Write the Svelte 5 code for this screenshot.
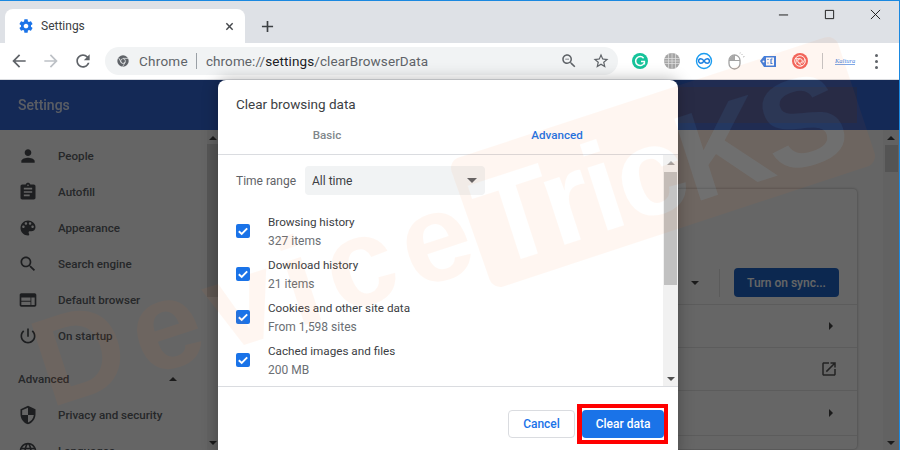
<script>
  const navItems = [
    { label: 'People', d: 'M12 12c2.21 0 4-1.79 4-4s-1.79-4-4-4-4 1.79-4 4 1.79 4 4 4zm0 2c-2.67 0-8 1.34-8 4v2h16v-2c0-2.66-5.33-4-8-4z' },
    { label: 'Autofill', d: 'M19 3h-4.18C14.4 1.84 13.3 1 12 1c-1.3 0-2.4.84-2.82 2H5c-1.1 0-2 .9-2 2v14c0 1.1.9 2 2 2h14c1.1 0 2-.9 2-2V5c0-1.1-.9-2-2-2zm-7 0c.55 0 1 .45 1 1s-.45 1-1 1-1-.45-1-1 .45-1 1-1zm2 14H7v-2h7v2zm3-4H7v-2h10v2zm0-4H7V7h10v2z' },
    { label: 'Appearance', d: 'M12 3c-4.97 0-9 4.03-9 9s4.03 9 9 9c.83 0 1.5-.67 1.5-1.5 0-.39-.15-.74-.39-1.01-.23-.26-.38-.61-.38-.99 0-.83.67-1.5 1.5-1.5H16c2.76 0 5-2.24 5-5 0-4.42-4.03-8-9-8zm-5.5 9c-.83 0-1.5-.67-1.5-1.5S5.67 9 6.5 9 8 9.67 8 10.5 7.33 12 6.5 12zm3-4C8.67 8 8 7.33 8 6.5S8.67 5 9.5 5s1.5.67 1.5 1.5S10.33 8 9.5 8zm5 0c-.83 0-1.5-.67-1.5-1.5S13.67 5 14.5 5s1.5.67 1.5 1.5S15.33 8 14.5 8zm3 4c-.83 0-1.5-.67-1.5-1.5S16.67 9 17.5 9s1.5.67 1.5 1.5-.67 1.5-1.5 1.5z' },
    { label: 'Search engine', d: 'M15.5 14h-.79l-.28-.27C15.41 12.59 16 11.11 16 9.5 16 5.91 13.09 3 9.5 3S3 5.91 3 9.5 5.91 16 9.5 16c1.61 0 3.09-.59 4.23-1.57l.27.28v.79l5 4.99L20.49 19l-4.99-5zm-6 0C7.01 14 5 11.99 5 9.5S7.01 5 9.5 5 14 7.01 14 9.5 11.99 14 9.5 14z' },
    { label: 'Default browser', d: 'M20 4H4c-1.1 0-1.99.9-1.99 2L2 18c0 1.1.9 2 2 2h16c1.1 0 2-.9 2-2V6c0-1.1-.9-2-2-2zm-5 14H4v-4h11v4zm0-5H4V9h11v4zm5 5h-4V9h4v9z' },
    { label: 'On startup', d: 'M13 3h-2v10h2V3zm4.83 2.17l-1.42 1.42C17.99 7.86 19 9.81 19 12c0 3.87-3.13 7-7 7s-7-3.13-7-7c0-2.19 1.01-4.14 2.58-5.42L6.17 5.17C4.23 6.82 3 9.26 3 12c0 4.97 4.03 9 9 9s9-4.03 9-9c0-2.74-1.23-5.18-3.17-6.83z' }
  ];

  const advancedItems = [
    { label: 'Privacy and security', d: 'M12 1L3 5v6c0 5.55 3.84 10.74 9 12 5.16-1.26 9-6.45 9-12V5l-9-4zm0 10.99h7c-.53 4.12-3.28 7.79-7 8.94V12H5V6.3l7-3.11v8.8z' },
    { label: 'Languages', d: 'M11.99 2C6.47 2 2 6.48 2 12s4.47 10 9.99 10C17.52 22 22 17.52 22 12S17.52 2 11.99 2zm6.93 6h-2.95c-.32-1.25-.78-2.45-1.38-3.56 1.84.63 3.37 1.91 4.33 3.56zM12 4.04c.83 1.2 1.48 2.53 1.91 3.96h-3.82c.43-1.43 1.08-2.76 1.91-3.96zM4.26 14C4.1 13.36 4 12.69 4 12s.1-1.36.26-2h3.38c-.08.66-.14 1.32-.14 2 0 .68.06 1.34.14 2H4.26zm.82 2h2.95c.32 1.25.78 2.45 1.38 3.56-1.84-.63-3.37-1.9-4.33-3.56zm2.95-8H5.08c.96-1.66 2.49-2.93 4.33-3.56C8.81 5.55 8.35 6.75 8.03 8zM12 19.96c-.83-1.2-1.48-2.53-1.91-3.96h3.82c-.43 1.43-1.08 2.76-1.91 3.96zM14.34 14H9.66c-.09-.66-.16-1.32-.16-2 0-.68.07-1.35.16-2h4.68c.09.65.16 1.32.16 2 0 .68-.07 1.34-.16 2zm.25 5.56c.6-1.11 1.06-2.31 1.38-3.56h2.95c-.96 1.65-2.49 2.93-4.33 3.56zM16.36 14c.08-.66.14-1.32.14-2 0-.68-.06-1.34-.14-2h3.38c.16.64.26 1.31.26 2s-.1 1.36-.26 2h-3.38z' }
  ];

  const dataTypes = [
    { title: 'Browsing history', sub: '327 items' },
    { title: 'Download history', sub: '21 items' },
    { title: 'Cookies and other site data', sub: 'From 1,598 sites' },
    { title: 'Cached images and files', sub: '200 MB' }
  ];
</script>

<div class="window">
  <div class="tabstrip">
    <div class="tab">
      <svg class="gear" viewBox="0 0 24 24"><path d="M19.43 12.98c.04-.32.07-.64.07-.98s-.03-.66-.07-.98l2.11-1.65c.19-.15.24-.42.12-.64l-2-3.46c-.12-.22-.39-.3-.61-.22l-2.49 1c-.52-.4-1.08-.73-1.69-.98l-.38-2.65C14.46 2.18 14.25 2 14 2h-4c-.25 0-.46.18-.49.42l-.38 2.65c-.61.25-1.17.59-1.69.98l-2.49-1c-.23-.09-.49 0-.61.22l-2 3.46c-.13.22-.07.49.12.64l2.11 1.65c-.04.32-.07.65-.07.98s.03.66.07.98l-2.11 1.65c-.19.15-.24.42-.12.64l2 3.46c.12.22.39.3.61.22l2.49-1c.52.4 1.08.73 1.69.98l.38 2.65c.03.24.24.42.49.42h4c.25 0 .46-.18.49-.42l.38-2.65c.61-.25 1.17-.59 1.69-.98l2.49 1c.23.09.49 0 .61-.22l2-3.46c.12-.22.07-.49-.12-.64l-2.11-1.65zM12 15.5c-1.93 0-3.5-1.57-3.5-3.5s1.57-3.5 3.5-3.5 3.5 1.57 3.5 3.5-1.57 3.5-3.5 3.5z"/></svg>
      <span class="tab-title">Settings</span>
      <svg class="tab-close" viewBox="0 0 10 10"><path d="M1.5 1.5l7 7M8.5 1.5l-7 7"/></svg>
    </div>
    <svg class="new-tab" viewBox="0 0 14 14"><path d="M7 1v12M1 7h12"/></svg>
    <div class="win-controls">
      <svg viewBox="0 0 12 12"><path d="M1 6.500h10"/></svg>
      <svg viewBox="0 0 12 12"><path d="M1.500 1.500h9v9h-9z"/></svg>
      <svg viewBox="0 0 12 12"><path d="M1 1l10 10M11 1L1 11"/></svg>
    </div>
  </div>

  <div class="toolbar">
    <div class="nav-buttons">
      <svg viewBox="0 0 24 24" class="nav-icon"><path d="M20 11H7.83l5.59-5.59L12 4l-8 8 8 8 1.41-1.41L7.83 13H20v-2z"/></svg>
      <svg viewBox="0 0 24 24" class="nav-icon off"><path d="M12 4l-1.41 1.41L16.17 11H4v2h12.17l-5.58 5.59L12 20l8-8z"/></svg>
      <svg viewBox="0 0 24 24" class="nav-icon"><path d="M17.65 6.35C16.2 4.9 14.21 4 12 4c-4.42 0-7.99 3.58-7.99 8s3.57 8 7.99 8c3.73 0 6.84-2.55 7.73-6h-2.08c-.82 2.33-3.04 4-5.65 4-3.31 0-6-2.69-6-6s2.69-6 6-6c1.66 0 3.14.69 4.22 1.78L13 11h7V4l-2.35 2.35z"/></svg>
    </div>
    <div class="omnibox">
      <svg class="chrome-icon" viewBox="0 0 16 16">
        <circle cx="8" cy="8" r="6.500" fill="#5f6368"/>
        <circle cx="8" cy="8" r="3" fill="#f1f3f4"/>
        <circle cx="8" cy="8" r="2.200" fill="#5f6368"/>
        <path d="M8 5h6M6 9.700L3 4.500M10.500 9.500l-3 5" stroke="#f1f3f4" stroke-width=".8" fill="none"/>
      </svg>
      <span class="origin">Chrome</span>
      <span class="omni-sep"></span>
      <span class="url">chrome://<b>settings</b>/clearBrowserData</span>
      <span class="omni-actions">
        <svg viewBox="0 0 24 24"><path d="M15.5 14h-.79l-.28-.27C15.41 12.59 16 11.11 16 9.5 16 5.91 13.09 3 9.5 3S3 5.91 3 9.5 5.91 16 9.5 16c1.61 0 3.09-.59 4.23-1.57l.27.28v.79l5 4.99L20.49 19l-4.99-5zm-6 0C7.01 14 5 11.99 5 9.5S7.01 5 9.5 5 14 7.01 14 9.5 11.99 14 9.5 14zM7 9h5v1H7z"/></svg>
        <svg viewBox="0 0 24 24"><path d="M22 9.24l-7.19-.62L12 2 9.19 8.63 2 9.24l5.46 4.73L5.82 21 12 17.27 18.18 21l-1.63-7.03L22 9.24zM12 15.4l-3.76 2.27 1-4.28-3.32-2.88 4.38-.38L12 6.1l1.71 4.04 4.38.38-3.32 2.88 1 4.28L12 15.4z"/></svg>
      </span>
    </div>
    <div class="extensions">
      <svg viewBox="0 0 18 18"><circle cx="9" cy="9" r="8" fill="#15c39a"/><path d="M12.600 6.200A4.500 4.500 0 1 0 13 11.400M10 9.600h3.400v3" fill="none" stroke="#fff" stroke-width="1.500"/></svg>
      <svg viewBox="0 0 18 18"><circle cx="9" cy="9" r="8" fill="#a5a5a5"/><path d="M1 6.500h16M1 9h16M1 11.500h16M5.500 2v14M9 1v16M12.500 2v14" stroke="#e4e4e4" stroke-width=".7" fill="none"/></svg>
      <svg viewBox="0 0 18 18"><circle cx="9" cy="9" r="7.500" fill="#fff" stroke="#1a9cf0" stroke-width="1.400"/><path d="M9 9C7.800 7.200 6.800 6.800 5.800 6.800a2.200 2.200 0 0 0 0 4.400c1 0 2-.4 3.200-2.200s2.200-2.200 3.200-2.200a2.200 2.200 0 0 1 0 4.400c-1 0-2-.4-3.200-2.200z" fill="none" stroke="#1a7fe0" stroke-width="1.400"/></svg>
      <svg viewBox="0 0 18 18"><rect x="2" y="3" width="11" height="14" rx="5.500" fill="#fff" stroke="#a3a3a3" stroke-width="1.300"/><path d="M2 8.500h11M7.500 3v5.500" stroke="#a3a3a3" stroke-width="1"/><path d="M2.500 8V7.500a5 5 0 0 1 5-4V8z" fill="#a9a9a9"/><path d="M14.500 3l1-1M16 5l1.500-.5M13 1.500l.3-1" stroke="#aaa" stroke-width=".8"/></svg>
      <svg viewBox="0 0 18 18"><path d="M1 9l4-5h12v11H5z" fill="#3f7fe0"/><rect x="7" y="5.500" width="8" height="8" fill="#fff"/><path d="M9 7v1M9 10.500v1M12 7v4.500h1.500M12 7h1.500" stroke="#3f7fe0" stroke-width="1.200" fill="none"/><circle cx="4.500" cy="9.500" r="1" fill="#fff"/></svg>
      <svg viewBox="0 0 18 18"><circle cx="9" cy="9" r="8" fill="#f2655f"/><circle cx="9" cy="9" r="5.300" fill="none" stroke="#fff" stroke-width="1"/><circle cx="9" cy="9" r="2.300" fill="none" stroke="#fff" stroke-width="1"/><path d="M4 6.500L9 6.700M14 7l-2.500 4.500M11 14L7 10.500M4.500 12l1.500-5.500" stroke="#fff" stroke-width=".8"/></svg>
    </div>
    <span class="ext-sep"></span>
    <span class="ext-label">Kaltura</span>
    <div class="menu-dots"><i></i><i></i><i></i></div>
  </div>

  <div class="page">
    <header class="settings-header">
      <span class="settings-title">Settings</span>
      <div class="search-box"></div>
    </header>

    <div class="settings-body">
      <nav class="sidebar">
        <div class="sidebar-inner">
          {#each navItems as item}
            <div class="nav-row">
              <svg viewBox="0 0 24 24"><path d={item.d}/></svg>
              <span>{item.label}</span>
            </div>
          {/each}
          <div class="advanced-row">
            <span>Advanced</span>
            <i class="tri up"></i>
          </div>
          {#each advancedItems as item}
            <div class="nav-row">
              <svg viewBox="0 0 24 24"><path d={item.d}/></svg>
              <span>{item.label}</span>
            </div>
          {/each}
        </div>
        <div class="scrollbar side-scroll">
          <i class="tri up"></i>
          <div class="thumb"></div>
          <i class="tri down end"></i>
        </div>
      </nav>

      <main class="main">
        <section class="card">
          <div class="sync-row">
            <i class="tri down"></i>
            <span class="sync-sep"></span>
            <button class="sync-btn">Turn on sync...</button>
          </div>
          <div class="card-row"><i class="tri right"></i></div>
          <div class="card-row">
            <svg viewBox="0 0 24 24"><path d="M19 19H5V5h7V3H5c-1.110 0-2 .9-2 2v14c0 1.100.89 2 2 2h14c1.100 0 2-.9 2-2v-7h-2v7zM14 3v2h3.590l-9.830 9.830 1.410 1.410L19 6.410V10h2V3h-7z"/></svg>
          </div>
          <div class="card-row tall"><i class="tri right"></i></div>
          <div class="card-row"></div>
        </section>
      </main>

      <div class="scrollbar main-scroll">
        <i class="tri up"></i>
        <div class="thumb"></div>
        <i class="tri down end"></i>
      </div>
    </div>

    <div class="scrim"></div>

    <div class="dialog">
      <h2>Clear browsing data</h2>
      <div class="tabs">
        <span class="dlg-tab">Basic</span>
        <span class="dlg-tab active">Advanced</span>
      </div>
      <div class="dlg-body">
        <div class="dlg-scroll">
          <div class="time-row">
            <span class="time-label">Time range</span>
            <div class="select">
              <span>All time</span>
              <i class="tri down"></i>
            </div>
          </div>
          {#each dataTypes as row}
            <div class="check-row">
              <svg class="checkbox" viewBox="0 0 14 14">
                <rect width="14" height="14" rx="2" fill="#1a73e8"/>
                <path d="M2.800 7.200l2.900 2.800 5.500-5.600" fill="none" stroke="#fff" stroke-width="1.900"/>
              </svg>
              <div class="check-text">
                <div class="check-title">{row.title}</div>
                <div class="check-sub">{row.sub}</div>
              </div>
            </div>
          {/each}
        </div>
        <div class="scrollbar dlg-bar">
          <i class="tri up"></i>
          <div class="thumb"></div>
          <i class="tri down end"></i>
        </div>
      </div>
      <div class="dlg-footer">
        <button class="btn-cancel">Cancel</button>
        <span class="highlight"><button class="btn-clear">Clear data</button></span>
      </div>
    </div>
  </div>

  <!-- site watermark: orange "Device", white "Tricks" knocked out of an orange banner -->
  <svg class="watermark" viewBox="0 0 900 450">
    <defs>
      <mask id="wm-mask" maskUnits="userSpaceOnUse" x="0" y="0" width="900" height="450">
        <rect width="900" height="450" fill="#fff"/>
        <text x="493" y="268" transform="rotate(-18 493 268)" class="wm-text tricks" fill="#000">TricKS</text>
      </mask>
    </defs>
    <g opacity=".05">
      <text x="50" y="408" transform="rotate(-18 50 408)" class="wm-text device" fill="#ff6a10">Device</text>
      <path d="M462 168L828 48 864 156 500 276z" fill="#ff6a10" stroke="#ff6a10" stroke-width="22" stroke-linejoin="round" mask="url(#wm-mask)"/>
    </g>
    <text x="493" y="268" transform="rotate(-18 493 268)" class="wm-text tricks" fill="#fff" fill-opacity=".07">TricKS</text>
  </svg>
</div>

<style>
  :global(body) {
    margin: 0;
    overflow: hidden;
  }

  .window {
    position: relative;
    width: 900px;
    height: 450px;
    overflow: hidden;
    display: flex;
    flex-direction: column;
    box-sizing: border-box;
    border-top: 1px solid #1a88e0;
    border-right: 1px solid #1a88e0;
    font-family: Roboto, "Liberation Sans", sans-serif;
    background: #fff;
  }

  /* tab strip */
  .tabstrip {
    height: 42px;
    flex: none;
    display: flex;
    align-items: flex-end;
    padding-left: 5px;
    background: #dee1e6;
  }
  .tab {
    width: 240px;
    height: 34px;
    box-sizing: border-box;
    display: flex;
    align-items: center;
    padding: 0 10px 0 13px;
    background: #fff;
    border-radius: 8px 8px 0 0;
  }
  .gear {
    width: 16px;
    height: 16px;
    fill: #1a73e8;
  }
  .tab-title {
    margin-left: 7px;
    font-size: 12px;
    color: #3c4043;
  }
  .tab-close {
    margin-left: auto;
    width: 9px;
    height: 9px;
    margin-right: 1px;
    fill: none;
    stroke: #45484c;
    stroke-width: 1.6;
  }
  .new-tab {
    width: 13px;
    height: 13px;
    margin: 0 0 10px 16px;
    fill: none;
    stroke: #3c4043;
    stroke-width: 1.8;
  }
  .win-controls {
    margin-left: auto;
    align-self: flex-start;
    display: flex;
    gap: 35px;
    padding: 8px 18px 0 0;
  }
  .win-controls svg {
    width: 11px;
    height: 11px;
    fill: none;
    stroke: #111;
    stroke-width: 1;
  }

  /* toolbar */
  .toolbar {
    height: 36px;
    flex: none;
    display: flex;
    align-items: center;
    background: #fff;
    border-bottom: 1px solid #dadce0;
  }
  .nav-buttons {
    display: flex;
    gap: 12px;
    width: 105px;
    padding-left: 9px;
    box-sizing: border-box;
  }
  .nav-icon {
    width: 20px;
    height: 20px;
    fill: #5f6368;
  }
  .nav-icon.off {
    fill: #bdc1c6;
  }
  .omnibox {
    width: 513px;
    height: 28px;
    display: flex;
    align-items: center;
    box-sizing: border-box;
    padding: 0 8px 0 11px;
    background: #f1f3f4;
    border-radius: 14px;
    font-size: 13.5px;
    color: #5f6368;
  }
  .chrome-icon {
    width: 14px;
    height: 14px;
    margin-right: 9px;
  }
  .origin {
    letter-spacing: .25px;
  }
  .omni-sep {
    width: 1px;
    height: 16px;
    margin: 0 9px 0 8px;
    background: #9aa0a6;
  }
  .url {
    letter-spacing: .09px;
  }
  .url b {
    font-weight: 400;
    color: #202124;
  }
  .omni-actions {
    margin-left: auto;
    display: flex;
    gap: 14px;
  }
  .omni-actions svg {
    width: 18px;
    height: 18px;
    fill: #5f6368;
  }
  .extensions {
    display: flex;
    gap: 14px;
    margin-left: 13px;
  }
  .extensions svg {
    width: 18px;
    height: 18px;
  }
  .ext-sep {
    width: 1px;
    height: 16px;
    margin-left: 13px;
    background: #c4c7ca;
  }
  .ext-label {
    width: 20px;
    margin-left: 12px;
    font: italic 6.5px "Liberation Serif", serif;
    line-height: 7px;
    color: #3f7fe0;
    border-bottom: 1px solid #7fa8e6;
    white-space: nowrap;
  }
  .menu-dots {
    display: flex;
    flex-direction: column;
    gap: 3px;
    margin-left: 20px;
  }
  .menu-dots i {
    width: 3px;
    height: 3px;
    border-radius: 50%;
    background: #5f6368;
  }

  /* settings page behind the dialog */
  .page {
    flex: 1;
    min-height: 0;
    position: relative;
    display: flex;
    flex-direction: column;
    background: #fff;
  }
  .settings-header {
    height: 50px;
    flex: none;
    display: flex;
    align-items: center;
    justify-content: space-between;
    padding: 0 42px 0 18px;
    background: #3367d6;
  }
  .settings-title {
    font-size: 14px;
    font-weight: 500;
    color: #fff;
    opacity: .85;
  }
  .search-box {
    width: 420px;
    height: 36px;
    background: #4664b7;
  }
  .settings-body {
    flex: 1;
    min-height: 0;
    display: flex;
  }
  .sidebar {
    width: 218px;
    flex: none;
    display: flex;
    background: #fdfdfd;
  }
  .sidebar-inner {
    flex: 1;
    padding-top: 8px;
  }
  .nav-row {
    height: 36px;
    display: flex;
    align-items: center;
    padding-left: 18px;
    font-size: 11.6px;
    font-weight: 500;
    color: #5f6368;
  }
  .nav-row svg {
    width: 20px;
    height: 20px;
    margin-right: 20px;
    fill: #4a4d51;
  }
  .advanced-row {
    height: 43px;
    padding: 7px 30px 0 18px;
    box-sizing: border-box;
    display: flex;
    align-items: center;
    justify-content: space-between;
    font-size: 11.6px;
    font-weight: 500;
    color: #5f6368;
  }

  .scrollbar {
    flex: none;
    display: flex;
    flex-direction: column;
    align-items: center;
  }
  .scrollbar .tri.up {
    margin-top: 6px;
  }
  .scrollbar .end {
    margin-top: auto;
    margin-bottom: 5px;
  }
  .side-scroll {
    width: 11px;
    background: #f6f6f6;
  }
  .side-scroll .thumb {
    width: 11px;
    height: 153px;
    margin-top: 4px;
    background: #d8d8d8;
  }
  .main-scroll {
    width: 16px;
    background: #f4f4f4;
  }
  .main-scroll .thumb {
    width: 13px;
    height: 27px;
    margin-top: 5px;
    background: #d2d2d2;
  }

  .main {
    flex: 1;
    min-width: 0;
    padding: 59px 26px 0 22px;
    background: #fdfdfd;
  }
  .card {
    height: 260px;
    background: #fff;
    border-radius: 4px;
    box-shadow: 0 0 3px rgba(0, 0, 0, .35);
  }
  .sync-row {
    height: 115px;
    box-sizing: border-box;
    padding: 72px 18px 0 0;
    display: flex;
    align-items: center;
    justify-content: flex-end;
  }
  .sync-sep {
    width: 1px;
    height: 28px;
    margin: 0 14px 0 20px;
    background: #e4e4e4;
  }
  .sync-btn {
    width: 105px;
    height: 29px;
    padding: 0;
    border: none;
    border-radius: 4px;
    background: #1e65c8;
    color: #fff;
    font: 500 12px Roboto, sans-serif;
  }
  .card-row {
    height: 43px;
    box-sizing: border-box;
    display: flex;
    align-items: center;
    justify-content: flex-end;
    padding-right: 20px;
    border-top: 1px solid #e6e6e6;
  }
  .card-row.tall {
    height: 45px;
  }
  .card-row svg {
    width: 18px;
    height: 18px;
    margin-right: -1px;
    fill: #555;
  }
  .card-row .tri {
    margin-right: 4px;
  }

  .scrim {
    position: absolute;
    inset: 0;
    background: rgba(0, 0, 0, .6);
  }

  /* dialog */
  .dialog {
    position: absolute;
    left: 218px;
    top: 0;
    width: 460px;
    height: 380px;
    display: flex;
    flex-direction: column;
    background: #fff;
    border-radius: 8px;
    box-shadow: 0 0 16px rgba(0, 0, 0, .3);
  }
  .dialog h2 {
    margin: 0;
    padding: 16px 18px 0;
    height: 40px;
    box-sizing: border-box;
    font-size: 13.5px;
    line-height: 17px;
    font-weight: 400;
    color: #3c4043;
  }
  .tabs {
    height: 34px;
    display: grid;
    grid-template-columns: 218px 242px;
    border-bottom: 1px solid #dadce0;
  }
  .dlg-tab {
    text-align: center;
    padding-top: 8px;
    font-size: 11.6px;
    font-weight: 500;
    color: #80868b;
  }
  .dlg-tab.active {
    color: #1a73e8;
  }
  .dlg-body {
    height: 231px;
    flex: none;
    display: flex;
    overflow: hidden;
    border-bottom: 1px solid #dadce0;
  }
  .dlg-scroll {
    flex: 1;
    min-width: 0;
    padding: 11px 0 0 18px;
  }
  .time-row {
    display: flex;
    align-items: center;
    gap: 9px;
    height: 29px;
    margin-bottom: 15px;
    font-size: 12px;
  }
  .time-label {
    color: #5f6368;
  }
  .select {
    width: 180px;
    height: 29px;
    box-sizing: border-box;
    display: flex;
    align-items: center;
    justify-content: space-between;
    padding: 0 7px;
    background: #f1f3f4;
    border-radius: 4px;
    color: #3c4043;
  }
  .check-row {
    height: 43px;
    display: flex;
    align-items: center;
  }
  .checkbox {
    width: 14px;
    height: 14px;
    flex: none;
    margin: -1px 18px 0 0;
  }
  .check-title {
    font-size: 11.7px;
    line-height: 18px;
    margin-bottom: 1px;
    color: #3c4043;
  }
  .check-sub {
    font-size: 12px;
    line-height: 18px;
    color: #6b6f74;
  }
  .dlg-bar {
    width: 15px;
    background: #f1f1f1;
  }
  .dlg-bar .thumb {
    width: 13px;
    height: 113px;
    margin-top: 7px;
    background: #c1c1c1;
  }
  .dlg-footer {
    flex: 1;
    display: flex;
    align-items: center;
    justify-content: flex-end;
    gap: 2px;
    padding-right: 10px;
  }
  .btn-cancel {
    width: 67px;
    height: 28px;
    padding: 0;
    background: #fff;
    border: 1px solid #dadce0;
    border-radius: 4px;
    color: #1a73e8;
    font: 500 12px Roboto, sans-serif;
  }
  .highlight {
    display: block;
    padding: 2px 0;
    border: 4px solid #f00;
    border-left-width: 5px;
  }
  .btn-clear {
    display: block;
    width: 82px;
    height: 28px;
    padding: 0;
    background: #1a73e8;
    border: none;
    border-radius: 4px;
    color: #fff;
    font: 500 12px Roboto, sans-serif;
  }

  /* small triangles used by menus and scrollbars */
  .tri {
    display: block;
    width: 0;
    height: 0;
    border-style: solid;
    border-color: transparent;
  }
  .tri.up {
    border-width: 0 4px 4px;
    border-bottom-color: #444;
  }
  .tri.down {
    border-width: 4px 4px 0;
    border-top-color: #444;
  }
  .tri.right {
    border-width: 4px 0 4px 4px;
    border-left-color: #444;
  }
  .select .tri.down {
    border-width: 5px 5px 0;
    border-top-color: #5f6368;
    margin-right: 1px;
  }
  .dlg-bar .tri.up {
    border-bottom-color: #a3a3a3;
  }
  .dlg-bar .tri.down {
    border-top-color: #505050;
  }

  .watermark {
    position: absolute;
    left: 0;
    top: -1px;
    width: 900px;
    height: 450px;
    pointer-events: none;
  }
  .wm-text {
    font: 700 125px "Liberation Sans", sans-serif;
  }
  .device {
    letter-spacing: 10px;
  }
  .tricks {
    letter-spacing: -3px;
  }
</style>
